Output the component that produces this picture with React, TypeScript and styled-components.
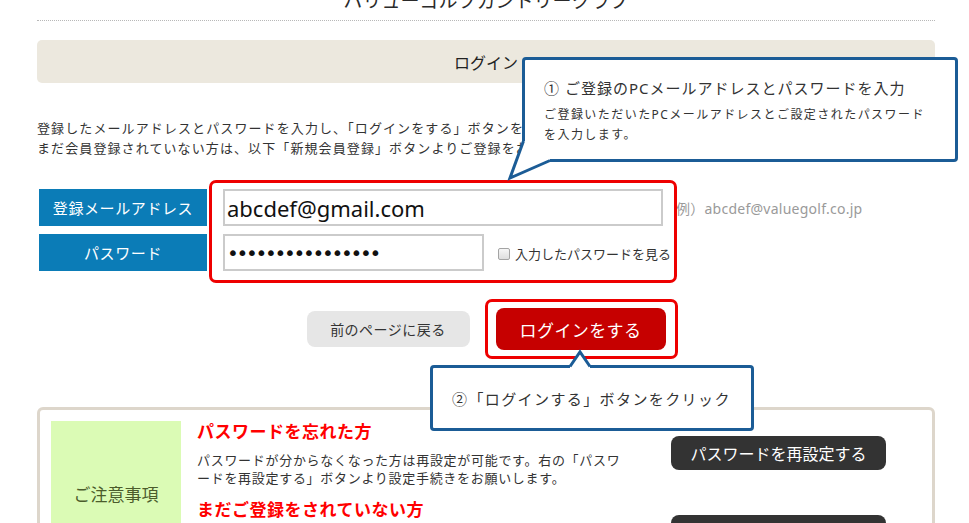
import React from "react"
import styled, { createGlobalStyle } from "styled-components"

const GlobalStyle = createGlobalStyle`
body{
  margin:0;
  background:#fff;
  font-family:"Noto Sans","Noto Sans CJK JP",sans-serif;
  color:#333;
  overflow:hidden;
}
`

const Page = styled.div`
position:relative;
width:898px;
margin-left:37px;
`
const Header = styled.header`
display:flow-root;
height:20px;
border-bottom:1px dotted #b8b8b8;
text-align:center;
`
const SiteTitle = styled.div`
margin-top:-8px;
font-size:19px;
line-height:19px;
color:#2a2a2a;
`
const LoginBar = styled.div`
margin-top:19px;
height:43px;
border-radius:5px;
background:#ece8de;
display:flex;
align-items:center;
justify-content:center;
font-size:16px;
color:#222;
`
const Intro = styled.p`
margin:35px 0 0;
font-size:13px;
line-height:20px;
letter-spacing:1.1px;
color:#333;
white-space:nowrap;
`
const Form = styled.div`
position:relative;
margin-top:31px;
display:flex;
flex-direction:column;
gap:8px;
`
const Row = styled.div`
display:flex;
align-items:center;
height:37px;
`
const FieldLabel = styled.div`
margin-left:2px;
width:168px;
height:37px;
background:#0b7cb7;
color:#fff;
font-size:15px;
letter-spacing:0.6px;
display:flex;
align-items:center;
justify-content:center;
`
const TextInput = styled.input<{ w: number; pw?: boolean }>`
margin-left:16px;
width:${p => p.w}px;
height:37px;
box-sizing:border-box;
border:2px solid #cbcbcb;
padding:0 2px;
font-family:${p => (p.pw ? `"DejaVu Sans"` : `"Noto Sans","Noto Sans CJK JP",sans-serif`)};
font-size:${p => (p.pw ? "20px" : "22px")};
letter-spacing:${p => (p.pw ? "-2.3px" : "0")};
color:#111;
outline:none;
background:#fff;
`
const Hint = styled.span`
margin-left:13px;
font-size:14px;
letter-spacing:0.25px;
color:#9a9a9a;
`
const CheckWrap = styled.label`
margin-left:14px;
margin-top:2px;
display:flex;
align-items:center;
gap:5px;
font-size:13px;
color:#333;
`
const Box = styled.span`
width:10px;
height:10px;
border:1px solid #a4a4a4;
border-radius:2px;
background:linear-gradient(#f6f6f6,#dedede);
`
const Highlight = styled.div<{ t: number; l: number; w: number; h: number }>`
position:absolute;
top:${p => p.t}px;
left:${p => p.l}px;
width:${p => p.w}px;
height:${p => p.h}px;
box-sizing:border-box;
border:3px solid #ee0000;
border-radius:7px;
pointer-events:none;
`
const Actions = styled.div`
margin-top:37px;
display:flex;
justify-content:center;
align-items:center;
gap:26px;
`
const BackButton = styled.button`
width:163px;
height:36px;
border:none;
border-radius:8px;
background:#e6e6e6;
color:#333;
font-family:inherit;
font-size:14px;
letter-spacing:0.5px;
`
const LoginWrap = styled.div`
position:relative;
`
const LoginButton = styled.button`
display:block;
width:170px;
height:42px;
border:none;
border-radius:8px;
background:#c60000;
color:#fff;
font-family:inherit;
font-size:17px;
letter-spacing:0.4px;
`
const Notice = styled.div`
margin-top:57px;
border:3px solid #ddd6cb;
border-radius:6px;
padding:11px;
display:flex;
gap:16px;
`
const NoticeHead = styled.div`
flex:none;
width:130px;
height:145px;
background:#dbfbb5;
color:#4b5c2c;
font-size:17px;
display:flex;
align-items:center;
justify-content:center;
`
const NoticeBody = styled.div`
display:flex;
flex-direction:column;
gap:12px;
`
const Section = styled.div`
display:flex;
gap:44px;
`
const SectionText = styled.div`
width:430px;
`
const RedTitle = styled.h3`
margin:0;
font-size:17px;
line-height:22px;
letter-spacing:0.5px;
font-weight:bold;
color:#ff0000;
`
const Desc = styled.p`
margin:8px 0 0;
font-size:13px;
line-height:18px;
letter-spacing:0.7px;
color:#333;
white-space:nowrap;
`
const DarkButton = styled.button<{ top: number }>`
margin-top:${p => p.top}px;
width:215px;
height:34px;
border:none;
border-radius:8px;
background:#333;
color:#fff;
font-family:inherit;
font-size:16px;
`
const Callout = styled.div<{ t: number; l: number; w: number; h: number }>`
position:absolute;
top:${p => p.t}px;
left:${p => p.l}px;
width:${p => p.w}px;
height:${p => p.h}px;
box-sizing:border-box;
border:3px solid #1b5c96;
border-radius:4px;
background:#fff;
z-index:5;
`
const Tail = styled.svg`
position:absolute;
left:-3px;
top:-3px;
width:1px;
height:1px;
overflow:visible;
`
const CalloutTitle = styled.div`
margin:18px 0 0 19px;
font-size:15px;
line-height:20px;
letter-spacing:1px;
color:#333;
`
const CalloutText = styled.div`
margin:7px 0 0 19px;
font-size:12px;
line-height:20px;
letter-spacing:1.45px;
color:#333;
width:392px;
`
const CalloutSingle = styled.div`
margin:21px 0 0 19px;
font-size:15px;
line-height:20px;
letter-spacing:1.4px;
color:#333;
`

export default function App() {
  return (
    <>
      <GlobalStyle />
      <Page>
        <Header>
          <SiteTitle>バリューゴルフカントリークラブ</SiteTitle>
        </Header>
        <LoginBar>ログイン</LoginBar>
        <Intro>
          登録したメールアドレスとパスワードを入力し、「ログインをする」ボタンを押してください。
          <br />
          まだ会員登録されていない方は、以下「新規会員登録」ボタンよりご登録をお願いします。
        </Intro>
        <Form>
          <Row>
            <FieldLabel>登録メールアドレス</FieldLabel>
            <TextInput w={440} readOnly value="abcdef@gmail.com" />
            <Hint>例）abcdef@valuegolf.co.jp</Hint>
          </Row>
          <Row>
            <FieldLabel>パスワード</FieldLabel>
            <TextInput w={261} pw readOnly value="••••••••••••••••" />
            <CheckWrap>
              <Box />
              入力したパスワードを見る
            </CheckWrap>
          </Row>
          <Highlight t={-9} l={172} w={468} h={103} />
        </Form>
        <Actions>
          <BackButton>前のページに戻る</BackButton>
          <LoginWrap>
            <LoginButton>ログインをする</LoginButton>
            <Highlight t={-9} l={-11} w={193} h={60} />
          </LoginWrap>
        </Actions>
        <Notice>
          <NoticeHead>ご注意事項</NoticeHead>
          <NoticeBody>
            <Section>
              <SectionText>
                <RedTitle>パスワードを忘れた方</RedTitle>
                <Desc>
                  パスワードが分からなくなった方は再設定が可能です。右の「パスワ
                  <br />
                  ードを再設定する」ボタンより設定手続きをお願いします。
                </Desc>
              </SectionText>
              <DarkButton top={15}>パスワードを再設定する</DarkButton>
            </Section>
            <Section>
              <SectionText>
                <RedTitle>まだご登録をされていない方</RedTitle>
                <Desc>新規会員登録ボタンより会員登録を行ってください。</Desc>
              </SectionText>
              <DarkButton top={16}>新規会員登録をする</DarkButton>
            </Section>
          </NoticeBody>
        </Notice>

        <Callout t={57} l={485} w={436} h={105}>
          <Tail>
            <polygon points="1.5,84 -12,121 28,103.5 28,101 3,101 3,84" fill="#fff" />
            <polyline points="1.5,84 -12,121 28,103.5" fill="none" stroke="#1b5c96" strokeWidth="3" />
          </Tail>
          <CalloutTitle>① ご登録のPCメールアドレスとパスワードを入力</CalloutTitle>
          <CalloutText>ご登録いただいたPCメールアドレスとご設定されたパスワードを入力します。</CalloutText>
        </Callout>

        <Callout t={365} l={393} w={324} h={66}>
          <Tail>
            <polygon points="140,1.5 150,-13 160,1.5 160,4 140,4" fill="#fff" />
            <polyline points="140,1.5 150,-13 160,1.5" fill="none" stroke="#1b5c96" strokeWidth="3" />
          </Tail>
          <CalloutSingle>②「ログインする」ボタンをクリック</CalloutSingle>
        </Callout>
      </Page>
    </>
  )
}
